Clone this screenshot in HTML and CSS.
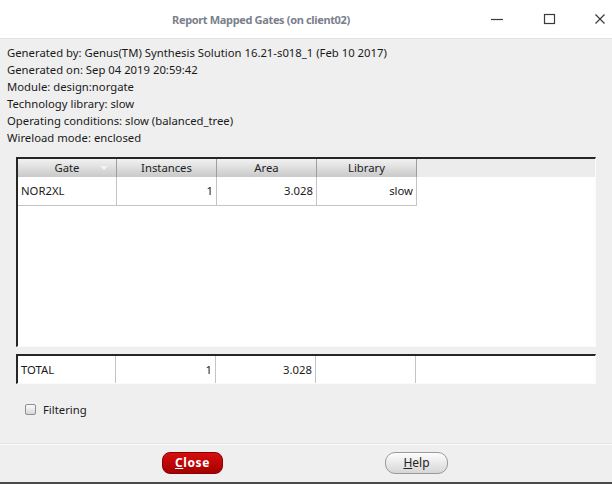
FILE: index.html
```html
<!DOCTYPE html>
<html>
<head>
<meta charset="utf-8">
<link rel="stylesheet" href="styles.css">
</head>
<body>
<div class="window">
  <div class="titlebar">
    <div class="title">Report Mapped Gates (on client02)</div>
    <div class="controls">
      <svg class="ctl" width="14" height="14" viewBox="0 0 14 14"><path d="M1 7.5H13" stroke="#3a3a3a" stroke-width="1.2"/></svg>
      <svg class="ctl" width="14" height="14" viewBox="0 0 14 14"><rect x="2.5" y="2.5" width="10" height="9" fill="none" stroke="#3a3a3a" stroke-width="1.2"/></svg>
      <svg class="ctl" width="14" height="14" viewBox="0 0 14 14"><path d="M2.5 2.5L11.5 11.5M11.5 2.5L2.5 11.5" stroke="#3a3a3a" stroke-width="1.2"/></svg>
    </div>
  </div>
  <div class="content">
    <div class="info">
      <div>Generated by: Genus(TM) Synthesis Solution 16.21-s018_1 (Feb 10 2017)</div>
      <div>Generated on: Sep 04 2019 20:59:42</div>
      <div>Module: design:norgate</div>
      <div>Technology library: slow</div>
      <div>Operating conditions: slow (balanced_tree)</div>
      <div>Wireload mode: enclosed</div>
    </div>
    <div class="table-frame">
      <div class="thead">
        <div class="th th-sort">Gate<span class="sort-arrow"></span></div>
        <div class="th">Instances</div>
        <div class="th">Area</div>
        <div class="th">Library</div>
      </div>
      <div class="tbody">
        <div class="tr">
          <div class="td left">NOR2XL</div>
          <div class="td right">1</div>
          <div class="td right">3.028</div>
          <div class="td right">slow</div>
        </div>
      </div>
    </div>
    <div class="total-frame">
      <div class="tc left">TOTAL</div>
      <div class="tc right">1</div>
      <div class="tc right">3.028</div>
      <div class="tc"></div>
      <div class="tc last"></div>
    </div>
    <label class="filter"><span class="checkbox"></span>Filtering</label>
  </div>
  <div class="buttons">
    <button class="btn btn-close"><u>C</u>lose</button>
    <button class="btn btn-help"><u>H</u>elp</button>
  </div>
</div>
</body>
</html>
```

FILE: styles.css
```css
* { box-sizing: border-box; }
html, body { margin: 0; padding: 0; }
body {
  width: 612px;
  height: 484px;
  background: #efefef;
  font-family: "Noto Sans", "Open Sans", sans-serif;
  font-size: 11.3px;
  color: #1a1a1a;
  overflow: hidden;
}
.window {
  width: 612px;
  height: 484px;
  display: flex;
  flex-direction: column;
  border-bottom: 2px solid #4a4a4a;
}
.titlebar {
  height: 39px;
  background: #ffffff;
  border-bottom: 1px solid #e2e2e2;
  display: grid;
  grid-template-columns: 1fr;
  align-items: center;
}
.title {
  grid-area: 1 / 1;
  text-align: center;
  padding-right: 90px;
  font-weight: bold;
  font-size: 11px;
  letter-spacing: -0.35px;
  color: #7a808c;
}
.controls {
  grid-area: 1 / 1;
  justify-self: end;
  display: flex;
  align-items: center;
  gap: 37px;
  padding-right: 5px;
}
.ctl { display: block; }
.ctl:first-child { margin-right: 1px; }
.content {
  flex: 1;
  padding: 5px 0 0 0;
}
.info {
  padding-left: 7px;
  line-height: 17px;
}
.table-frame {
  margin: 11px 0 0 16px;
  width: 580px;
  height: 190px;
  border-top: 2px solid #262626;
  border-left: 2px solid #262626;
  border-right: 1px solid #fbfbfb;
  border-bottom: 1px solid #fbfbfb;
  background: #ffffff;
  display: flex;
  flex-direction: column;
}
.thead {
  display: flex;
  height: 18px;
  background: #ececec;
}
.th {
  width: 100px;
  height: 18px;
  line-height: 18px;
  text-align: center;
  background: linear-gradient(#f2f2f2, #c9c9c9);
  border-right: 1px solid #9e9e9e;
  color: #222;
  position: relative;
}
.th-sort { width: 99px; }
.sort-arrow {
  position: absolute;
  right: 8px;
  top: 7px;
  width: 0;
  height: 0;
  border-left: 4px solid transparent;
  border-right: 4px solid transparent;
  border-top: 4px solid #f4f4f4;
}
.tbody { flex: 1; }
.tr { display: flex; height: 29px; }
.td {
  height: 29px;
  line-height: 28px;
  border-right: 1px solid #c4c4c4;
  border-bottom: 1px solid #c4c4c4;
  padding: 0 3px;
  width: 100px;
}
.td:first-child { width: 99px; }
.left { text-align: left; }
.right { text-align: right; }
.total-frame {
  margin: 7px 0 0 16px;
  width: 580px;
  height: 30px;
  border-top: 2px solid #262626;
  border-left: 2px solid #262626;
  border-right: 1px solid #fbfbfb;
  border-bottom: 1px solid #fbfbfb;
  background: #ffffff;
  display: flex;
}
.tc {
  width: 100px;
  line-height: 27px;
  border-right: 1px solid #c4c4c4;
  padding: 0 3px;
}
.tc:first-child { width: 98px; }
.tc.last { flex: 1; border-right: none; }
.filter {
  display: flex;
  align-items: center;
  gap: 7px;
  margin: 17px 0 0 25px;
  height: 16px;
}
.checkbox {
  width: 11px;
  height: 11px;
  border: 1px solid #8e8e8e;
  border-radius: 2px;
  background: linear-gradient(#fafafa, #d8d8d8);
}
.buttons {
  height: 38px;
  border-top: 1px solid #fcfcfc;
  box-shadow: 0 -1px 0 #e3e3e3;
  display: flex;
  align-items: center;
  padding: 0 0 2px 162px;
}
.btn {
  font-family: "Noto Sans", "Open Sans", sans-serif;
  font-size: 12px;
  height: 22px;
  padding: 0;
  cursor: default;
}
.btn-close {
  width: 61px;
  border: 1px solid #8a0000;
  border-radius: 8px;
  background: linear-gradient(#d80e0e, #a30000);
  color: #ffffff;
  font-weight: bold;
  letter-spacing: 0.6px;
}
.btn-help {
  margin-left: 162px;
  width: 63px;
  border: 1px solid #9a9a9a;
  border-radius: 10px;
  background: linear-gradient(#fdfdfd, #d6d6d6);
  color: #222;
}
```
